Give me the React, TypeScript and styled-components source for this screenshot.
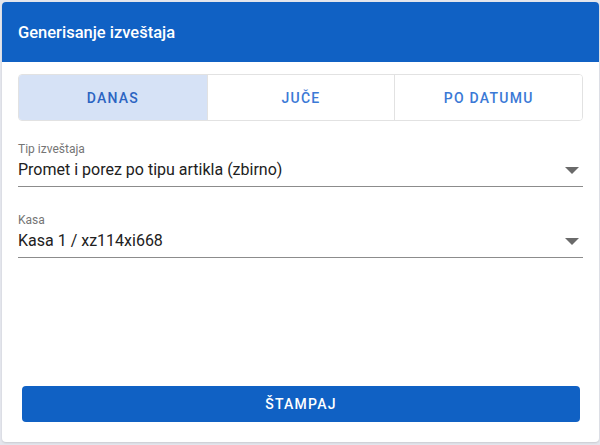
import React, { useState } from 'react'
import styled, { createGlobalStyle } from 'styled-components'

const GlobalStyle = createGlobalStyle`
    html, body {
        margin: 0;
        padding: 0;
        background: #e4e6ed;
        font-family: Roboto, "Liberation Sans", sans-serif;
    }
    * {
        box-sizing: border-box;
    }
`

const Page = styled.div`
    padding: 2px;
    width: 600px;
    height: 445px;
`

const Card = styled.div`
    width: 597px;
    height: 440px;
    background: #fff;
    border-radius: 4px;
    overflow: hidden;
    display: flex;
    flex-direction: column;
    box-shadow: 0 1px 2px rgba(0, 0, 0, 0.12);
`

const Header = styled.div`
    height: 60px;
    background: #1061c4;
    color: #fff;
    display: flex;
    align-items: center;
    padding: 0 16px;
    font-size: 16.5px;
    font-weight: 500;
`

const Body = styled.div`
    flex: 1;
    display: flex;
    flex-direction: column;
    padding: 12px 16px 20px;
`

const Tabs = styled.div`
    display: grid;
    grid-template-columns: repeat(3, 1fr);
    height: 47px;
    border: 1px solid #e2e2e2;
    border-radius: 4px;
    overflow: hidden;
`

const Tab = styled.button<{ $active?: boolean }>`
    border: none;
    border-left: 1px solid #e2e2e2;
    background: ${p => (p.$active ? '#d6e2f6' : '#fff')};
    color: ${p => (p.$active ? '#2c64c2' : '#3b79d6')};
    font-family: inherit;
    font-size: 14px;
    font-weight: 500;
    letter-spacing: 1.25px;
    text-transform: uppercase;
    cursor: pointer;
    &:first-child {
        border-left: none;
    }
`

const Field = styled.div<{ $top: number }>`
    margin-top: ${p => p.$top}px;
    position: relative;
    border-bottom: 1px solid #8c8c8c;
    padding-bottom: 4px;
`

const Label = styled.div`
    font-size: 12px;
    line-height: 14px;
    color: #757575;
`

const Value = styled.div`
    font-size: 16px;
    line-height: 24px;
    color: #212121;
    margin-top: 2px;
`

const Arrow = styled.span`
    position: absolute;
    right: 4px;
    bottom: 12px;
    width: 0;
    height: 0;
    border-left: 7px solid transparent;
    border-right: 7px solid transparent;
    border-top: 7px solid #6a6a6a;
`

const PrintButton = styled.button`
    margin: auto 3px 0 4px;
    height: 36px;
    border: none;
    border-radius: 4px;
    background: #1061c4;
    color: #fff;
    font-family: inherit;
    font-size: 14px;
    font-weight: 500;
    letter-spacing: 1.25px;
    cursor: pointer;
`

const tabs = ['Danas', 'Juče', 'Po datumu']

export default function App() {
    const [active, setActive] = useState(0)
    return (
        <>
            <GlobalStyle />
            <Page>
                <Card>
                    <Header>Generisanje izveštaja</Header>
                    <Body>
                        <Tabs>
                            {tabs.map((t, i) => (
                                <Tab key={t} $active={i === active} onClick={() => setActive(i)}>
                                    {t}
                                </Tab>
                            ))}
                        </Tabs>
                        <Field $top={21}>
                            <Label>Tip izveštaja</Label>
                            <Value>Promet i porez po tipu artikla (zbirno)</Value>
                            <Arrow />
                        </Field>
                        <Field $top={26}>
                            <Label>Kasa</Label>
                            <Value>Kasa 1 / xz114xi668</Value>
                            <Arrow />
                        </Field>
                        <PrintButton>ŠTAMPAJ</PrintButton>
                    </Body>
                </Card>
            </Page>
        </>
    )
}
